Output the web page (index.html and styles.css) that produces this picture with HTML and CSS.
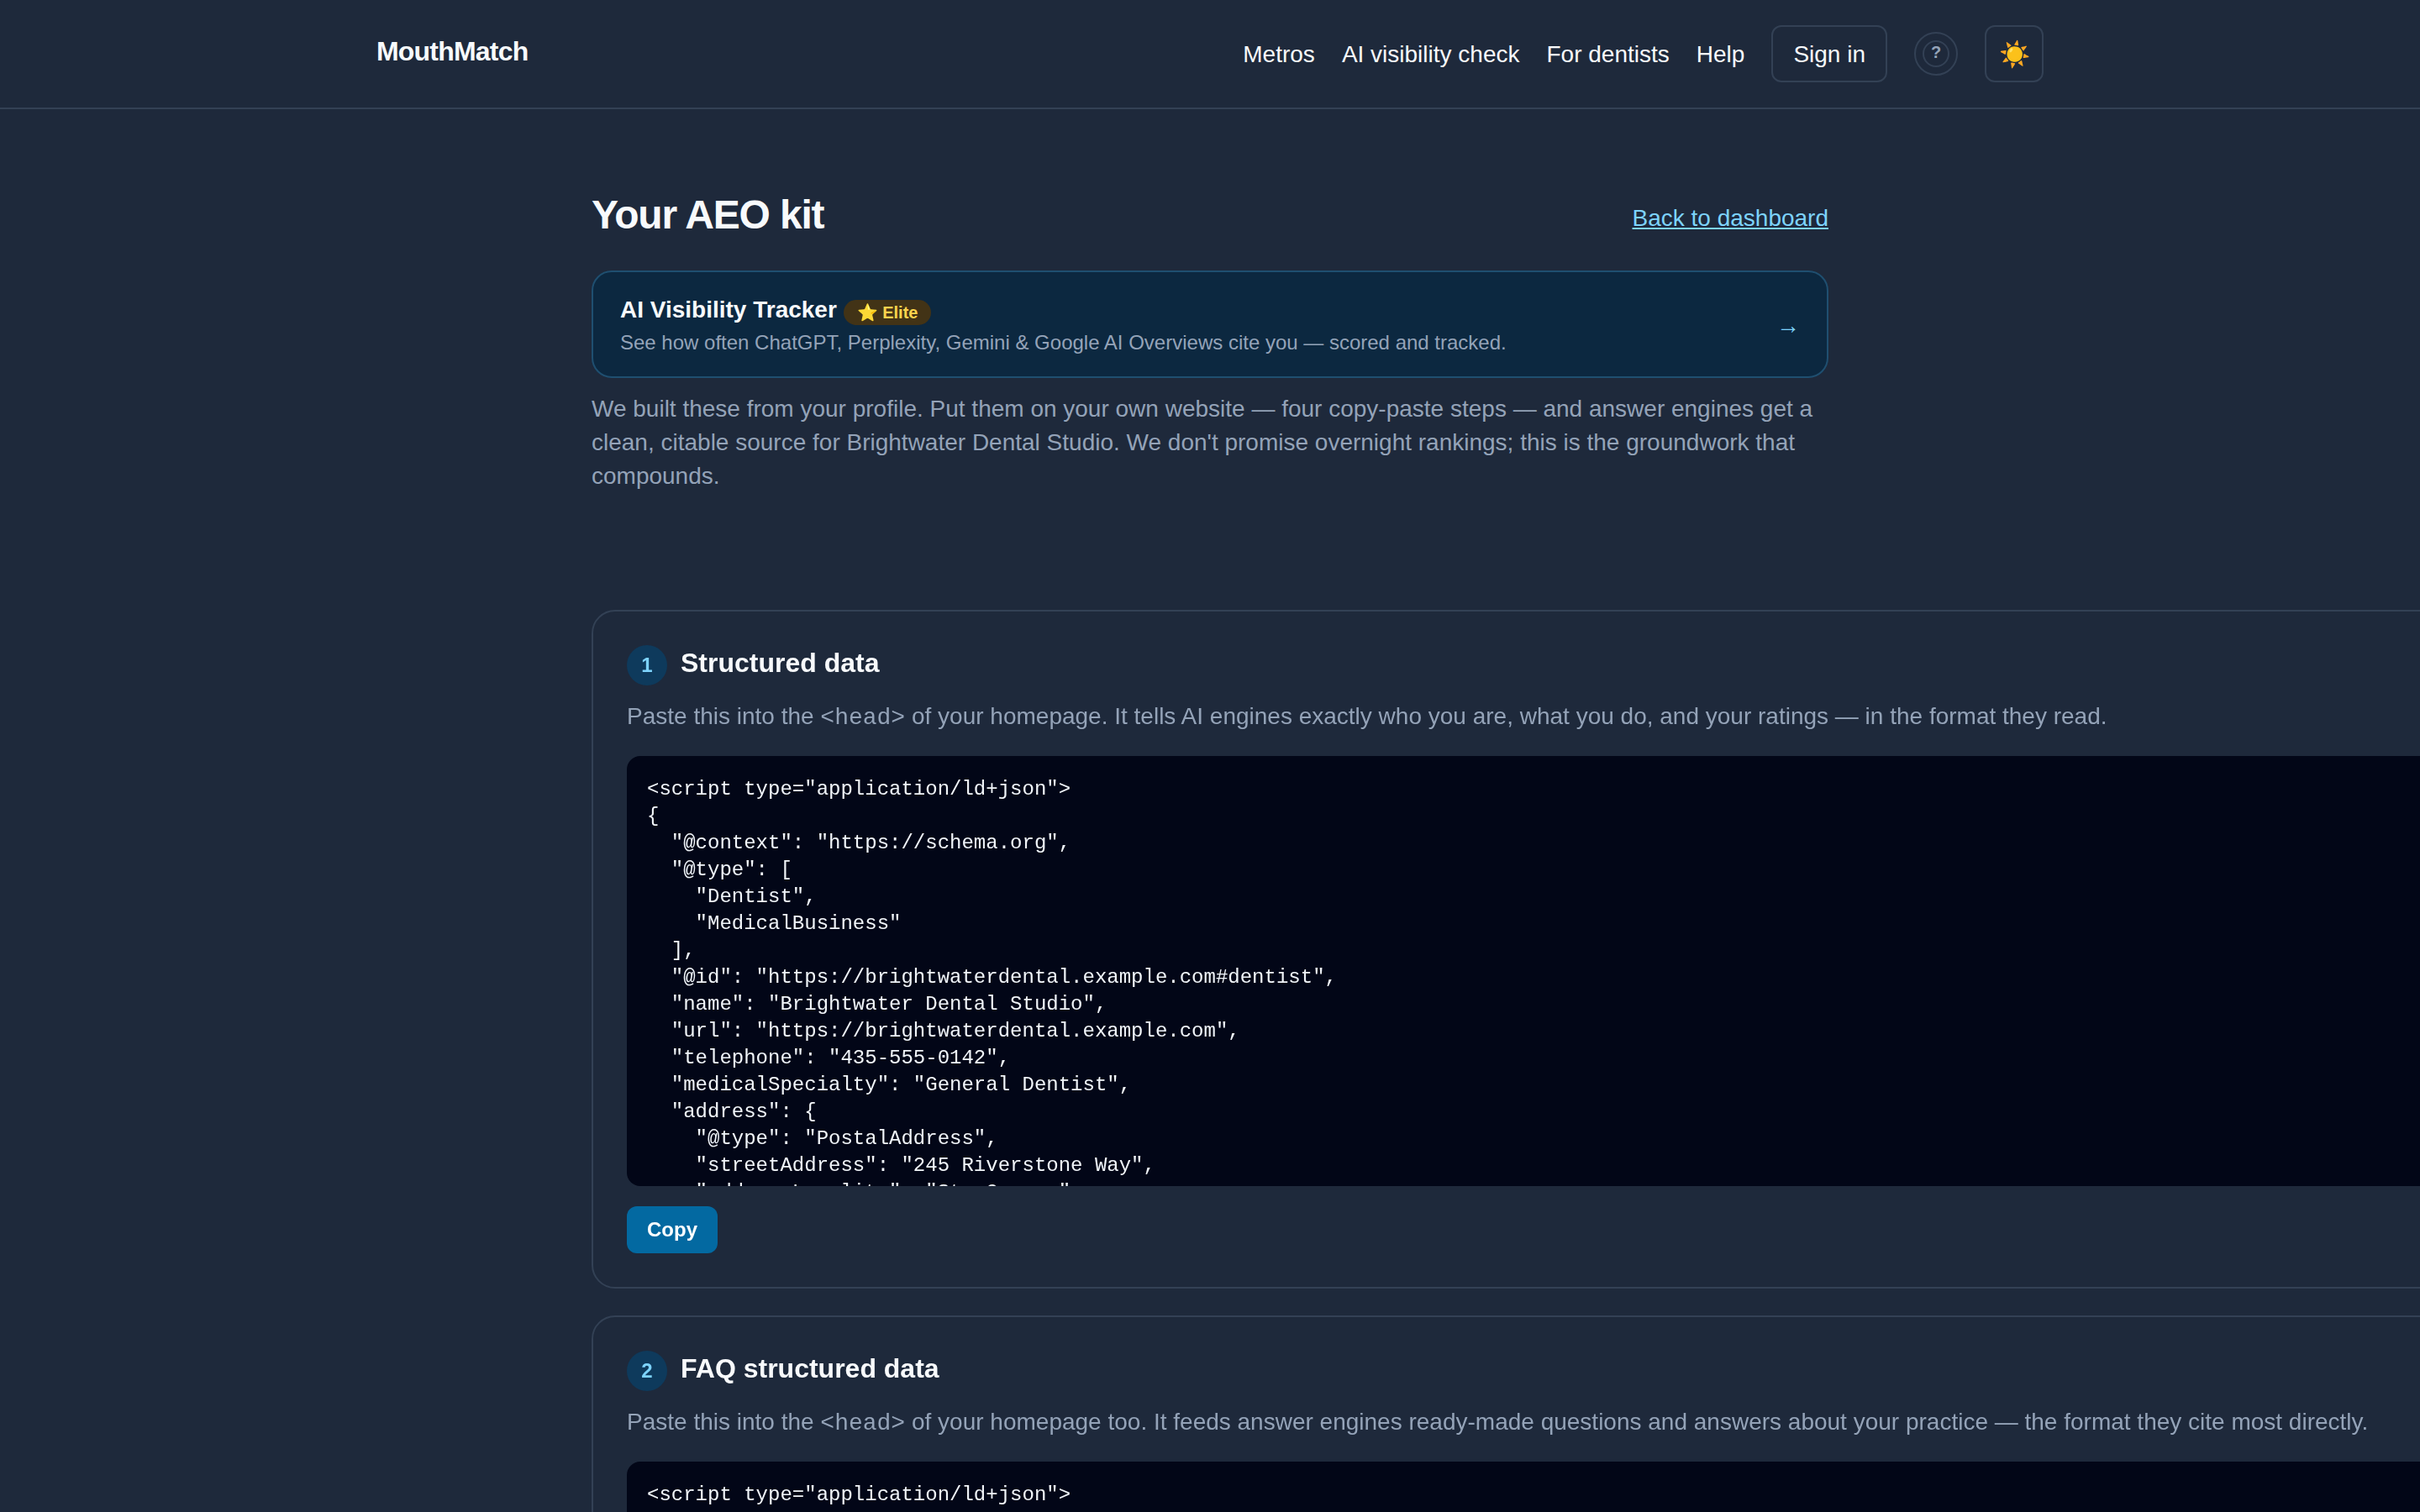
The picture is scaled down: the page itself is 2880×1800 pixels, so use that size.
FILE: index.html
```html
<!DOCTYPE html>
<html lang="en">
<head>
<meta charset="utf-8">
<title>Your AEO kit</title>
<link rel="stylesheet" href="styles.css">
</head>
<body>
<header class="site-header">
  <div class="header-inner">
    <a class="logo">MouthMatch</a>
    <nav class="nav">
      <a class="nav-link">Metros</a>
      <a class="nav-link">AI visibility check</a>
      <a class="nav-link">For dentists</a>
      <a class="nav-link">Help</a>
      <a class="btn-outline">Sign in</a>
      <span class="help-ring"><span class="help-dot">?</span></span>
      <button class="theme-btn">☀️</button>
    </nav>
  </div>
</header>
<main class="main">
  <div class="title-row">
    <h1 class="title">Your AEO kit</h1>
    <a class="back">Back to dashboard</a>
  </div>
  <a class="tracker">
    <div class="tracker-text">
      <div class="tracker-title">AI Visibility Tracker <span class="badge">⭐ Elite</span></div>
      <div class="tracker-sub">See how often ChatGPT, Perplexity, Gemini &amp; Google AI Overviews cite you — scored and tracked.</div>
    </div>
    <span class="arrow">→</span>
  </a>
  <p class="intro">We built these from your profile. Put them on your own website — four copy-paste steps — and answer engines get a clean, citable source for Brightwater Dental Studio. We don't promise overnight rankings; this is the groundwork that compounds.</p>
  <section class="step step-first">
    <div class="step-head"><span class="num">1</span><h2 class="step-title">Structured data</h2></div>
    <p class="step-desc">Paste this into the <code class="inline-code">&lt;head&gt;</code> of your homepage. It tells AI engines exactly who you are, what you do, and your ratings — in the format they read.</p>
<pre class="code">&lt;script type="application/ld+json"&gt;
{
  "@context": "https://schema.org",
  "@type": [
    "Dentist",
    "MedicalBusiness"
  ],
  "@id": "https://brightwaterdental.example.com#dentist",
  "name": "Brightwater Dental Studio",
  "url": "https://brightwaterdental.example.com",
  "telephone": "435-555-0142",
  "medicalSpecialty": "General Dentist",
  "address": {
    "@type": "PostalAddress",
    "streetAddress": "245 Riverstone Way",
    "addressLocality": "St. George",
  }
}</pre>
    <button class="copy">Copy</button>
  </section>
  <section class="step">
    <div class="step-head"><span class="num">2</span><h2 class="step-title">FAQ structured data</h2></div>
    <p class="step-desc">Paste this into the <code class="inline-code">&lt;head&gt;</code> of your homepage too. It feeds answer engines ready-made questions and answers about your practice — the format they cite most directly.</p>
<pre class="code">&lt;script type="application/ld+json"&gt;
{
  "@context": "https://schema.org",
}</pre>
  </section>
</main>
</body>
</html>
```

FILE: styles.css
```css
* { box-sizing: border-box; }
html, body { margin: 0; padding: 0; height: 1800px; overflow: hidden; }
body { background: #1e293b; color: #f8fafc; font-family: "Liberation Sans", Arial, sans-serif; }

.site-header { height: 130px; border-bottom: 2px solid #334155; }
.header-inner { width: 1984px; margin: 0 auto; height: 128px; display: flex; justify-content: space-between; align-items: center; }
.logo { font-size: 32px; font-weight: 700; letter-spacing: -0.8px; margin-top: -6px; }
.nav { display: flex; align-items: center; gap: 32px; }
.nav-link { font-size: 28px; color: #f8fafc; margin-top: 2px; }
.btn-outline { display: flex; align-items: center; height: 68px; padding: 2px 24px 0; border: 2px solid #334155; border-radius: 12px; font-size: 28px; }
.help-ring { width: 52px; height: 52px; border: 2px solid #334155; border-radius: 50%; display: flex; align-items: center; justify-content: center; }
.help-dot { width: 32px; height: 32px; border: 2px solid #334155; border-radius: 50%; color: #94a3b8; font-size: 20px; font-weight: 700; line-height: 24px; display: flex; align-items: flex-start; justify-content: center; }
.theme-btn { width: 70px; height: 68px; border: 2px solid #334155; border-radius: 12px; background: transparent; font-size: 30px; padding: 0; color: #f8fafc; font-family: inherit; }

.main { width: 1472px; margin: 0 auto; padding-top: 98px; }
.title-row { display: flex; justify-content: space-between; align-items: center; }
.title { margin: 0; font-size: 48px; font-weight: 700; letter-spacing: -1.2px; line-height: 56px; }
.back { font-size: 28px; color: #7dd3fc; text-decoration: underline; margin-top: 7px; }
.tracker { display: flex; align-items: center; justify-content: space-between; margin-top: 38px; height: 128px; padding: 0 32px; background: #0c2840; border: 2px solid #1f4f70; border-radius: 24px; }
.tracker-text { padding-top: 4px; }
.tracker-title { font-size: 28px; font-weight: 700; line-height: 38px; }
.badge { display: inline-block; height: 30px; line-height: 30px; padding: 0 16px; border-radius: 999px; background: #423316; color: #fcd34d; font-size: 20px; font-weight: 700; vertical-align: -1px; }
.tracker-sub { font-size: 24px; line-height: 36px; margin-top: 2px; color: #94a3b8; }
.arrow { color: #7dd3fc; font-size: 28px; margin-top: 4px; }
.intro { margin: 17px 0 0; font-size: 28px; line-height: 40px; color: #94a3b8; }

.step { width: 2500px; margin-bottom: 32px; padding: 40px; border: 2px solid #334155; border-radius: 28px; will-change: transform; }
.step-first { margin-top: 139px; }
.step-head { display: flex; align-items: center; gap: 16px; height: 48px; }
.num { width: 48px; height: 48px; border-radius: 50%; background: #0e3a5c; color: #7dd3fc; font-size: 24px; font-weight: 700; display: flex; align-items: center; justify-content: center; }
.step-title { margin: -6px 0 0; font-size: 32px; font-weight: 700; }
.step-desc { margin: 17px 0 0; font-size: 28px; line-height: 40px; color: #94a3b8; }
.inline-code { font-family: "Liberation Mono", monospace; font-size: 28px; line-height: 1; }
.code { margin: 27px 0 0; height: 512px; overflow: auto; padding: 24px; background: #020617; border-radius: 16px; color: #f1f5f9; font-family: "Liberation Mono", monospace; font-size: 24px; line-height: 32px; }
.copy { display: block; margin-top: 24px; width: 108px; height: 56px; border: 0; border-radius: 12px; background: #0369a1; color: #fff; font-family: inherit; font-size: 24px; font-weight: 700; padding: 0; }
```
